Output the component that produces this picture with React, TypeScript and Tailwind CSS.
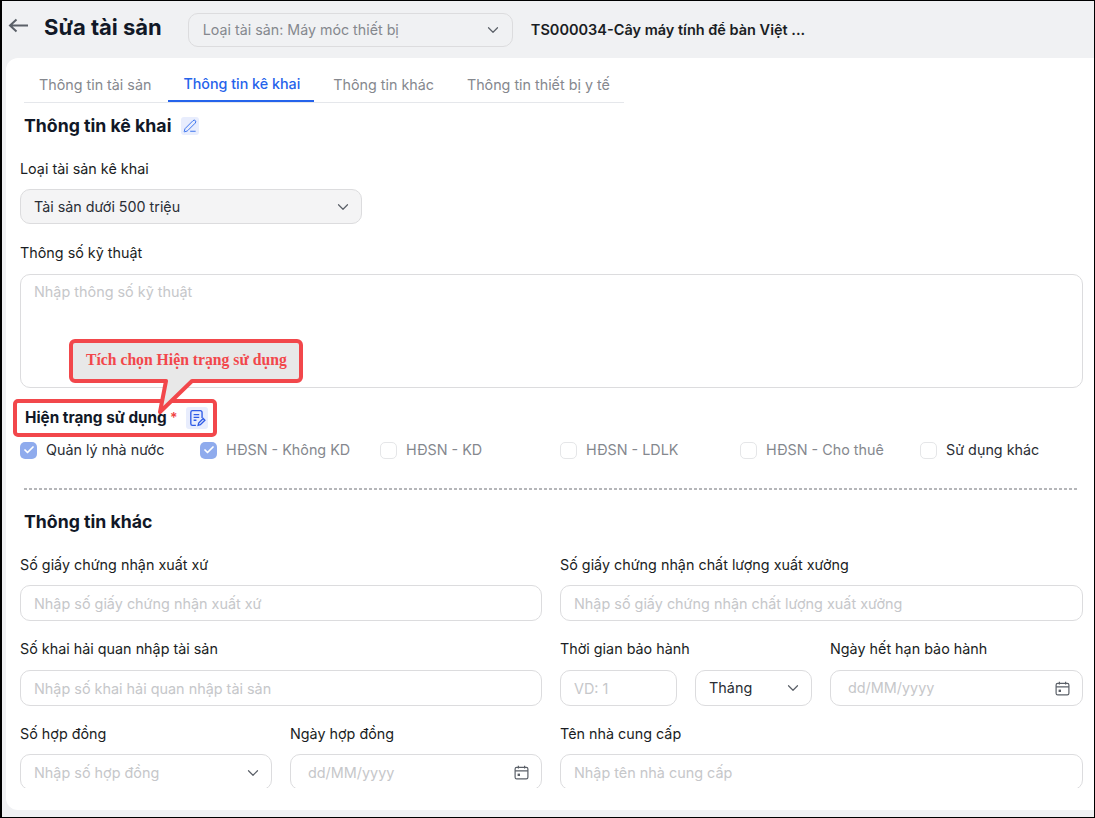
import { Check, ChevronDown, PenLine } from 'lucide-react'

const inputClass =
  'h-9 w-full rounded-[10px] border border-[#dcdcde] bg-white px-[13px] text-[14.4px] text-[#1f2937] outline-none placeholder:text-[#c6c7ca]'

const checks = [
  { label: 'Quản lý nhà nước', checked: true, dark: true },
  { label: 'HĐSN - Không KD', checked: true },
  { label: 'HĐSN - KD' },
  { label: 'HĐSN - LDLK' },
  { label: 'HĐSN - Cho thuê' },
  { label: 'Sử dụng khác', dark: true },
]

function Label({ children }: { children: string }) {
  return <div className="h-5 text-[14.35px] leading-5 text-[#1a1d23]">{children}</div>
}

function Chevron() {
  return <ChevronDown size={18} strokeWidth={1.6} className="text-[#5b6068]" />
}

function CalendarIcon() {
  return (
    <svg width="15" height="15" viewBox="0 0 15 15" fill="none" stroke="#5b6068" strokeWidth="1.2">
      <rect x="1.1" y="2.4" width="12.8" height="11.4" rx="1.6" />
      <path d="M1.1 5.8h12.8M4.4 0.8v2.6M10.6 0.8v2.6" />
      <rect x="3.6" y="8.6" width="2.4" height="2.4" fill="#5b6068" stroke="none" />
    </svg>
  )
}

function TextField({ label, placeholder, wide }: { label: string; placeholder: string; wide?: boolean }) {
  return (
    <div className={wide ? 'flex flex-col gap-[11px]' : 'flex flex-col gap-[10px]'}>
      <Label>{label}</Label>
      <input className={inputClass} placeholder={placeholder} />
    </div>
  )
}

function DateField({ label, wide }: { label: string; wide?: boolean }) {
  return (
    <div className={wide ? 'flex flex-col gap-[11px]' : 'flex flex-col gap-[10px]'}>
      <Label>{label}</Label>
      <div
        className={
          wide
            ? 'flex h-9 items-center justify-between rounded-[10px] border border-[#dcdcde] pl-[17px] pr-[12px] text-[14.4px] text-[#c6c7ca]'
            : 'flex h-9 items-center justify-between rounded-[10px] border border-[#dcdcde] pl-[17px] pr-[12px] pt-px text-[14.4px] text-[#c6c7ca]'
        }
      >
        dd/MM/yyyy
        <CalendarIcon />
      </div>
    </div>
  )
}

const tabClass = 'flex h-[44px] shrink-0 items-center whitespace-nowrap pt-[10px] text-[14.3px]'

export default function App() {
  return (
    <div className="relative flex h-[818px] w-[1095px] flex-col overflow-hidden border-y border-l-2 border-r border-black bg-[#f0f1f3] font-['Inter',sans-serif]">
      {/* Header */}
      <header className="flex h-[57px] shrink-0 items-center">
        <svg width="21" height="15" viewBox="0 0 21 15" fill="none" stroke="#5b6068" strokeWidth="2" className="ml-[6px] mb-[9px]">
          <path d="M20 7.5H2M8.5 1.5l-6.5 6 6.5 6" />
        </svg>
        <h1 className="ml-[15px] mb-[5px] text-[22px] font-bold text-[#111827]">Sửa tài sản</h1>
        <div className="ml-[26px] flex h-[34px] w-[325px] items-center justify-between rounded-[10px] border border-[#dcdcde] pl-[14px] pr-[10px] text-[14.25px] text-[#85888e]">
          Loại tài sản: Máy móc thiết bị
          <Chevron />
        </div>
        <div className="ml-[18px] text-[14.5px] font-semibold text-[#1a1d23]">TS000034-Cây máy tính để bàn Việt ...</div>
      </header>

      {/* Card */}
      <main className="ml-[4px] flex h-[752px] flex-col rounded-l-xl bg-white">
        <div className="h-[730px] overflow-hidden pl-[14px] pr-[11px]">
          {/* Tabs */}
          <div className="ml-[4px] flex h-[45px] w-[600px] gap-[3px] border-b border-[#e5e7eb]">
            <div className={`${tabClass} pl-[15px] pr-[14px] text-[#85888e]`}>Thông tin tài sản</div>
            <div className={`${tabClass} border-b-2 border-[#2563eb] pl-[15px] pr-[14px] font-medium text-[#2563eb]`}>Thông tin kê khai</div>
            <div className={`${tabClass} px-[16px] text-[#85888e]`}>Thông tin khác</div>
            <div className={`${tabClass} pl-[14px] pr-[13px] text-[#85888e]`}>Thông tin thiết bị y tế</div>
          </div>

          <div className="mt-[11px] ml-[4px] flex h-6 items-center gap-[10px]">
            <h2 className="text-[17.7px] font-bold text-[#111827]">Thông tin kê khai</h2>
            <span className="flex h-[18px] w-[18px] items-center justify-center rounded-[3px] bg-[#e8edfd]">
              <PenLine size={14} strokeWidth={1.5} className="text-[#2563eb]" />
            </span>
          </div>

          <div className="mt-[21px]">
            <Label>Loại tài sản kê khai</Label>
          </div>
          <div className="mt-[10px] flex h-[35px] w-[342px] items-center justify-between rounded-[10px] border border-[#dcdcde] bg-[#f4f4f5] pl-[13px] pr-[9px] text-[14.3px] text-[#2a2e35]">
            Tài sản dưới 500 triệu
            <Chevron />
          </div>

          <div className="mt-[19px]">
            <Label>Thông số kỹ thuật</Label>
          </div>
          <textarea
            className="mt-[11px] block h-[114px] w-full resize-none rounded-[10px] border border-[#dcdcde] px-[13px] py-[6px] text-[14.4px] outline-none placeholder:text-[#c6c7ca]"
            placeholder="Nhập thông số kỹ thuật"
          />

          {/* Hiện trạng */}
          <div className="mt-[18px] ml-[5px] flex h-6 items-center">
            <span className="w-[145px] whitespace-nowrap text-[15.3px] font-bold text-[#111827]">Hiện trạng sử dụng</span>
            <span className="text-sm font-semibold text-[#ef4444]">*</span>
            <span className="ml-[8px] flex h-[22px] w-[22px] items-center justify-center rounded-[3px] bg-[#e8edfd]">
              <svg width="18" height="18" viewBox="0 0 16 16" fill="none" stroke="#2f5be7" strokeWidth="1.2">
                <path d="M7 14.5H4a1.5 1.5 0 0 1-1.5-1.5V3A1.5 1.5 0 0 1 4 1.5h7A1.5 1.5 0 0 1 12.5 3v5" />
                <path d="M5 5h5M5 7.5h5M5 10h2.5" />
                <path d="M9 14.5l.5-2 4-4 1.5 1.5-4 4z" />
              </svg>
            </span>
          </div>
          <div className="mt-[8px] grid h-[24px] grid-cols-[repeat(6,180px)]">
            {checks.map(({ label, checked, dark }) => (
              <div key={label} className="flex items-center gap-[9px]">
                <span
                  className={
                    checked
                      ? 'flex h-[17px] w-[17px] items-center justify-center rounded-[5px] bg-[#8fabed]'
                      : 'h-[17px] w-[17px] rounded-[5px] border border-[#e5e6e8] bg-white'
                  }
                >
                  {checked && <Check size={12} strokeWidth={3.5} className="text-white" />}
                </span>
                <span className={dark ? 'text-[14.35px] text-[#2a2e35]' : 'text-[14.35px] text-[#85888e]'}>{label}</span>
              </div>
            ))}
          </div>

          <div className="mt-[26px] ml-[4px] mr-[4px] h-[2px] bg-[repeating-linear-gradient(90deg,#b5b6b9_0_3px,transparent_3px_5px)]" />

          <h2 className="mt-[20px] ml-[4px] h-6 text-[17.7px] leading-6 font-bold text-[#111827]">Thông tin khác</h2>

          <div className="mt-[21px] grid grid-cols-[522px_1fr] gap-x-[18px] gap-y-[18px]">
            <TextField label="Số giấy chứng nhận xuất xứ" placeholder="Nhập số giấy chứng nhận xuất xứ" />
            <TextField label="Số giấy chứng nhận chất lượng xuất xưởng" placeholder="Nhập số giấy chứng nhận chất lượng xuất xưởng" />
            <TextField label="Số khai hải quan nhập tài sản" placeholder="Nhập số khai hải quan nhập tài sản" wide />
            <div className="grid grid-cols-[252px_1fr] gap-x-[18px]">
              <div className="flex flex-col gap-[11px]">
                <Label>Thời gian bảo hành</Label>
                <div className="grid grid-cols-[117px_117px] gap-x-[18px]">
                  <input className={inputClass} placeholder="VD: 1" />
                  <div className="flex h-9 items-center justify-between rounded-[10px] border border-[#dcdcde] pl-[13px] pr-[9px] text-[14.4px] text-[#2a2e35]">
                    Tháng
                    <Chevron />
                  </div>
                </div>
              </div>
              <DateField label="Ngày hết hạn bảo hành" wide />
            </div>
            <div className="grid grid-cols-[252px_252px] gap-x-[18px]">
              <div className="flex flex-col gap-[10px]">
                <Label>Số hợp đồng</Label>
                <div className="flex h-9 items-center justify-between rounded-[10px] border border-[#dcdcde] pl-[13px] pr-[9px] pt-px text-[14.4px] text-[#c6c7ca]">
                  Nhập số hợp đồng
                  <Chevron />
                </div>
              </div>
              <DateField label="Ngày hợp đồng" />
            </div>
            <TextField label="Tên nhà cung cấp" placeholder="Nhập tên nhà cung cấp" />
          </div>
        </div>
      </main>

      {/* Annotation over the page */}
      <div className="absolute left-[11px] top-[398px] h-[38px] w-[204px] rounded-[5px] border-4 border-[#f2474b]" />
      <svg className="absolute left-[65px] top-[338px]" width="240" height="80" viewBox="0 0 240 80">
        <path
          d="M8 2H230a4 4 0 0 1 4 4V38a4 4 0 0 1-4 4H125L93 73 99 42H8a4 4 0 0 1-4-4V6a4 4 0 0 1 4-4z"
          fill="#e8e8e8"
          stroke="#f2474b"
          strokeWidth="4"
          strokeLinejoin="round"
        />
      </svg>
      <div className="absolute left-[84px] top-[347px] font-['Liberation_Serif',serif] text-[15.7px] font-bold text-[#f2474b]">
        Tích chọn Hiện trạng sử dụng
      </div>
    </div>
  )
}
